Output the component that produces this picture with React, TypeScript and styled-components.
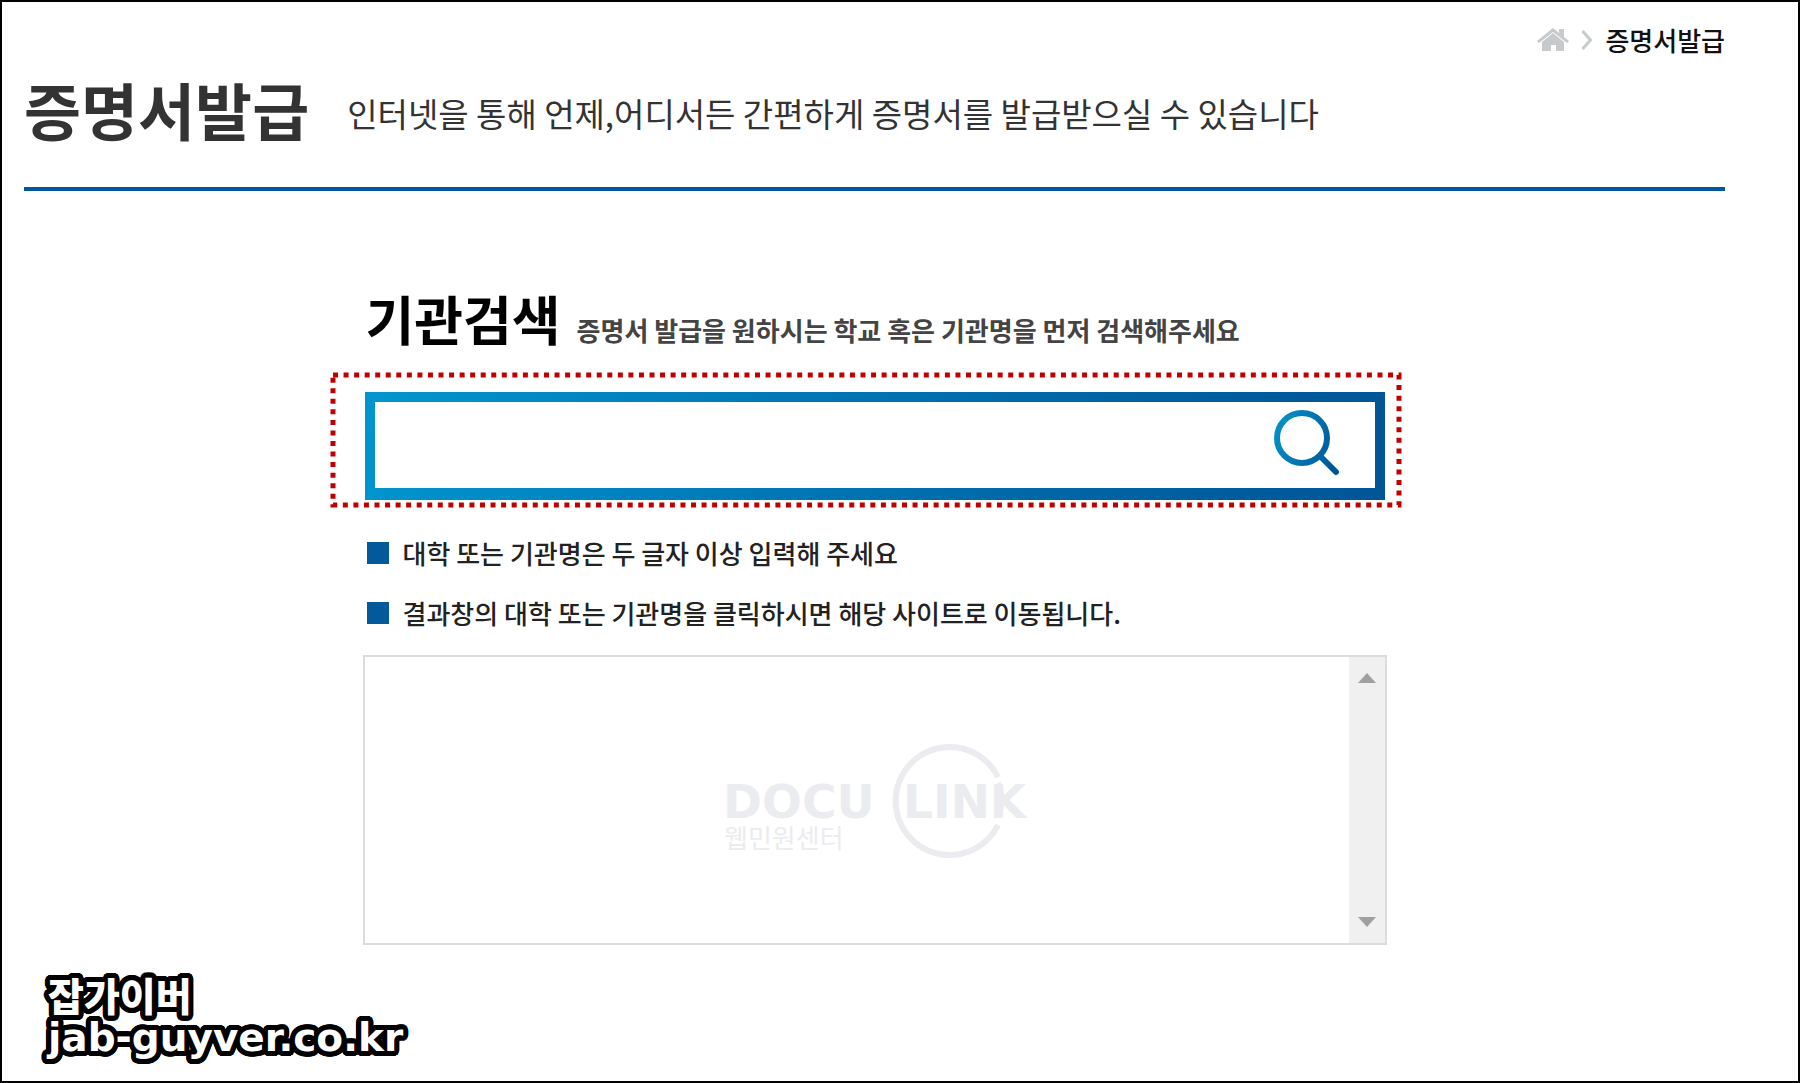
import React, { useState } from "react";
import styled, { createGlobalStyle } from "styled-components";

const GlobalStyle = createGlobalStyle`
  *, *::before, *::after { box-sizing: border-box; }
  body {
    margin: 0;
    background: #fff;
    font-family: "Noto Sans CJK KR", "Noto Sans", sans-serif;
  }
  h1, h2, p, ul { margin: 0; padding: 0; }
`;

const Page = styled.div`
  display: flex;
  flex-direction: column;
  min-height: 100vh;
  padding: 18px 73px 21px 22px;
  border: 2px solid #000;
  background: #fff;
`;

const Breadcrumb = styled.nav`
  display: flex;
  align-items: center;
  justify-content: flex-end;
  gap: 12px;
  height: 40px;
`;

const HomeLink = styled.a`
  display: flex;
  color: #c6cacd;
`;

const Current = styled.span`
  font-size: 26px;
  font-weight: 500;
  line-height: 40px;
  color: #111;
`;

const TitleBar = styled.header`
  display: flex;
  flex-wrap: wrap;
  align-items: center;
  gap: 38px;
  padding-bottom: 29px;
  border-bottom: 4px solid #02559f;
`;

const Title = styled.h1`
  font-size: 62px;
  font-weight: 700;
  line-height: 98px;
  color: #333;
`;

const Lead = styled.p`
  padding-top: 8px;
  font-size: 33px;
  line-height: 48px;
  color: #333;
`;

const Content = styled.main`
  width: 100%;
  max-width: 1024px;
  margin: 0 auto;
  padding-top: 87px;
`;

const SectionHead = styled.div`
  display: flex;
  flex-wrap: wrap;
  align-items: baseline;
  gap: 16px;
  padding: 0 3px;
`;

const SectionTitle = styled.h2`
  font-size: 53px;
  font-weight: 700;
  line-height: 80px;
  color: #000;
`;

const SectionNote = styled.p`
  font-size: 26px;
  font-weight: 700;
  line-height: 40px;
  color: #444;
`;

const SearchArea = styled.div`
  position: relative;
  margin-top: 34px;
  padding: 0 2px;
`;

const Highlight = styled.svg`
  position: absolute;
  top: -20px;
  left: -33px;
  width: calc(100% + 42px);
  height: calc(100% + 22px);
  overflow: visible;
  pointer-events: none;
`;

const SearchForm = styled.form`
  display: flex;
  padding: 10px 10px 12px;
  background: linear-gradient(100deg, #0295cd 0%, #0078b6 40%, #005f9f 80%, #005596 100%);
`;

const SearchInput = styled.input`
  flex: 1;
  min-width: 0;
  height: 86px;
  padding: 0 24px;
  border: 0;
  outline: 0;
  background: #fff;
  font-family: inherit;
  font-size: 32px;
`;

const SearchButton = styled.button`
  display: flex;
  align-items: center;
  justify-content: center;
  width: 136px;
  padding: 0 0 4px;
  border: 0;
  background: #fff;
  cursor: pointer;
`;

const Tips = styled.ul`
  padding: 23px 4px 0;
  list-style: none;
`;

const Tip = styled.li`
  display: flex;
  align-items: center;
  gap: 14px;
  font-size: 26px;
  font-weight: 500;
  line-height: 60px;
  color: #222;

  &::before {
    content: "";
    flex: none;
    width: 22px;
    height: 22px;
    background: #025a9c;
  }
`;

const Results = styled.section`
  display: flex;
  height: 290px;
  margin-top: 12px;
  border: 2px solid #dcdcdc;
`;

const ResultList = styled.div`
  display: flex;
  flex: 1;
  align-items: center;
  justify-content: center;
  padding-left: 36px;
`;

const ScrollTrack = styled.div`
  display: flex;
  flex-direction: column;
  justify-content: space-between;
  width: 36px;
  padding: 8px 0;
  background: #f0f0f0;
`;

const ScrollButton = styled.button`
  display: flex;
  align-items: center;
  justify-content: center;
  height: 26px;
  padding: 0;
  border: 0;
  background: none;
`;

const roundOutline = Array.from({ length: 32 }, (_, i) => {
  const angle = (i * Math.PI) / 16;
  return `${(Math.cos(angle) * 5).toFixed(2)}px ${(Math.sin(angle) * 5).toFixed(2)}px 0 #000`;
}).join(", ");

const Signature = styled.footer`
  margin-top: auto;
  padding-left: 24px;
  color: #fff;
  line-height: 44px;
  text-shadow: ${roundOutline};
`;

const SignatureName = styled.p`
  font-size: 39px;
  font-weight: 900;
`;

const SignatureSite = styled.p`
  font-family: "DejaVu Sans", sans-serif;
  font-size: 39px;
  font-weight: 700;
`;

const HomeIcon = () => (
  <svg width="32" height="24" viewBox="0 0 32 24" fill="currentColor" aria-hidden="true">
    <path d="M16 0 22 5V1h5v8l5 4-2 2L16 4 2 15l-2-2z" />
    <path d="M16 5 27 14V23h-8v-6h-5v6H5v-9z" />
  </svg>
);

const ChevronIcon = () => (
  <svg width="12" height="20" viewBox="0 0 12 20" fill="none" stroke="#c6cacd" strokeWidth="3" aria-hidden="true">
    <path d="M1.500 1 9.500 10 1.500 19" />
  </svg>
);

const SearchIcon = () => (
  <svg width="66" height="66" viewBox="0 0 66 66" fill="none" aria-hidden="true">
    <defs>
      <linearGradient id="lens" gradientUnits="userSpaceOnUse" x1="0" y1="20" x2="66" y2="46">
        <stop offset="0" stopColor="#0490c6" />
        <stop offset="1" stopColor="#005596" />
      </linearGradient>
    </defs>
    <g stroke="url(#lens)" strokeLinecap="round">
      <circle cx="28" cy="28" r="25" strokeWidth="6" />
      <path d="M46 46 62 62" strokeWidth="6" />
    </g>
  </svg>
);

const DocuLinkLogo = () => (
  <svg width="308" height="118" viewBox="0 0 308 118" fill="#ebecef" role="img" aria-label="DOCULINK 웹민원센터">
    <path d="M277 36A54 54 0 1 0 277 84" fill="none" stroke="#ebecef" strokeWidth="6" />
    <path d="M277 42Q284 59 277 76" fill="none" stroke="#ebecef" strokeWidth="6" />
    <g fontFamily="DejaVu Sans, sans-serif" fontSize="47" fontWeight="700">
      <text x="2" y="77">DOCU</text>
      <text x="182" y="77">LINK</text>
    </g>
    <text x="3" y="107" fontFamily="Noto Sans CJK KR, sans-serif" fontSize="26">웹민원센터</text>
  </svg>
);

const Arrow = ({ down = false }: { down?: boolean }) => (
  <svg width="18" height="10" viewBox="0 0 18 10" fill="#a0a0a0" aria-hidden="true">
    <path d={down ? "M0 0h18L9 10z" : "M0 10h18L9 0z"} />
  </svg>
);

const tips = [
  "대학 또는 기관명은 두 글자 이상 입력해 주세요",
  "결과창의 대학 또는 기관명을 클릭하시면 해당 사이트로 이동됩니다.",
];

export default function App() {
  const [query, setQuery] = useState("");

  return (
    <>
      <GlobalStyle />
      <Page>
        <Breadcrumb aria-label="현재 위치">
          <HomeLink href="#" aria-label="홈">
            <HomeIcon />
          </HomeLink>
          <ChevronIcon />
          <Current>증명서발급</Current>
        </Breadcrumb>
        <TitleBar>
          <Title>증명서발급</Title>
          <Lead>인터넷을 통해 언제,어디서든 간편하게 증명서를 발급받으실 수 있습니다</Lead>
        </TitleBar>
        <Content>
          <SectionHead>
            <SectionTitle>기관검색</SectionTitle>
            <SectionNote>증명서 발급을 원하시는 학교 혹은 기관명을 먼저 검색해주세요</SectionNote>
          </SectionHead>
          <SearchArea>
            <SearchForm role="search" onSubmit={(e) => e.preventDefault()}>
              <SearchInput
                type="text"
                aria-label="기관명"
                value={query}
                onChange={(e) => setQuery(e.target.value)}
              />
              <SearchButton type="submit" aria-label="검색">
                <SearchIcon />
              </SearchButton>
            </SearchForm>
            <Highlight aria-hidden="true">
              <rect
                x="3"
                y="3"
                width="100%"
                height="100%"
                fill="none"
                stroke="#c00000"
                strokeWidth="5"
                strokeDasharray="5 5.550"
              />
            </Highlight>
          </SearchArea>
          <Tips>
            {tips.map((tip) => (
              <Tip key={tip}>{tip}</Tip>
            ))}
          </Tips>
          <Results aria-label="검색 결과">
            <ResultList>
              <DocuLinkLogo />
            </ResultList>
            <ScrollTrack>
              <ScrollButton type="button" aria-label="위로">
                <Arrow />
              </ScrollButton>
              <ScrollButton type="button" aria-label="아래로">
                <Arrow down />
              </ScrollButton>
            </ScrollTrack>
          </Results>
        </Content>
        <Signature>
          <SignatureName>잡가이버</SignatureName>
          <SignatureSite>jab-guyver.co.kr</SignatureSite>
        </Signature>
      </Page>
    </>
  );
}
